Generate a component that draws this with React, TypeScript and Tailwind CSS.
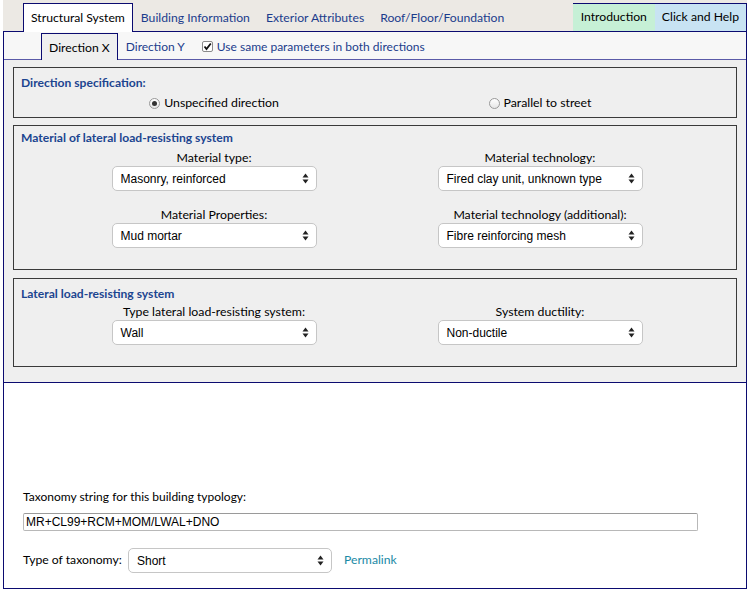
import React from "react";

const lato = { fontFamily: "Lato, 'Open Sans', sans-serif" };
const helv = { fontFamily: "'Liberation Sans', Arial, sans-serif" };

function Arrows() {
  return (
    <svg width="7" height="11" viewBox="0 0 7 11" className="shrink-0">
      <path d="M3.5 0.5 L6.5 4.5 L0.5 4.5 Z" fill="#222" />
      <path d="M3.5 10.5 L6.5 6.5 L0.5 6.5 Z" fill="#222" />
    </svg>
  );
}

function Select({ value, w = "w-[205px]" }: { value: string; w?: string }) {
  return (
    <div
      className={`${w} h-[25px] bg-white border border-[#c6c6c6] rounded-[5px] flex items-center justify-between pl-[8px] pr-[7px] text-[12px] text-black`}
      style={helv}
    >
      <span>{value}</span>
      <Arrows />
    </div>
  );
}

function Field({ label, value }: { label: string; value: string }) {
  return (
    <div className="flex flex-col items-center">
      <div className="text-[12.3px] leading-[16px] text-black h-[16px]">{label}</div>
      <Select value={value} />
    </div>
  );
}

function Radio({ checked, label }: { checked?: boolean; label: string }) {
  return (
    <div className="flex items-center justify-center gap-[4px]">
      <span className="w-[11px] h-[11px] rounded-full border border-[#9a9a9a] bg-gradient-to-b from-white to-[#e6e6e6] flex items-center justify-center">
        {checked && <span className="w-[5px] h-[5px] rounded-full bg-[#333]" />}
      </span>
      <span className="text-[12.3px] text-black">{label}</span>
    </div>
  );
}

export default function App() {
  return (
    <div className="w-[750px] h-[597px] bg-white" style={lato}>
      <div className="ml-[3px] w-[744px] pt-[3px] bg-[#ece9e4]">
        {/* Top tab bar */}
        <div className="flex h-[29px] items-stretch border-b border-[#0b0b70] relative">
          <div className="w-[20px]" />
          <div className="bg-white border border-b-0 border-[#0b0b70] px-[7px] flex items-center text-[12.2px] text-black -mb-[1px] h-[29px] pt-[1px]">
            Structural System
          </div>
          <div className="flex items-center text-[12.2px] text-[#1b3c8c] pl-[8px] gap-[16px] pt-[2px]">
            <span>Building Information</span>
            <span>Exterior Attributes</span>
            <span>Roof/Floor/Foundation</span>
          </div>
          <div className="flex-1" />
          <div className="flex items-stretch border-t border-r border-[#0b0b70] text-[12.2px] text-black">
            <div className="bg-[#c6f0d6] px-[8px] flex items-center">Introduction</div>
            <div className="bg-[#c8e3f3] px-[7px] flex items-center">Click and Help</div>
          </div>
        </div>
      </div>
      <div className="ml-[3px] w-[744px] border-l border-r border-b border-[#0b0b70] h-[557px]">
        {/* Sub tabs */}
        <div className="h-[28px] bg-[#f7f7f7] flex items-stretch border-b border-[#5a5aa8]">
          <div className="w-[37px]" />
          <div className="bg-[#efefef] border border-b-0 border-[#0b0b70] px-[7px] flex items-center text-[12.2px] text-black -mb-[1px] mt-[1px] pt-[2px]">
            Direction X
          </div>
          <div className="flex items-center text-[12px] pl-[8px] pt-[2px]">
            <span className="text-[#1b3c8c]">Direction Y</span>
            <span className="ml-[17px] w-[11px] h-[11px] border border-[#8a8a8a] rounded-[2px] bg-white flex items-center justify-center">
              <svg width="9" height="9" viewBox="0 0 9 9">
                <path d="M1.5 4.5 L3.5 7 L7.8 1.5" stroke="#111" strokeWidth="1.8" fill="none" />
              </svg>
            </span>
            <span className="ml-[4px] text-[#1b3c8c]">Use same parameters in both directions</span>
          </div>
        </div>

        {/* Content */}
        <div className="bg-[#efefef] border-b border-[#0b0b70] px-[9px] pt-[7px] pb-[15px]">
          <div className="border border-[#3a3a3a] h-[51px] pt-[7px]">
            <div className="pl-[7px] text-[12.1px] font-bold text-[#1c4590] leading-[16px]">Direction specification:</div>
            <div className="grid grid-cols-[326px_326px] pl-[37px] mt-[3px]">
              <Radio checked label="Unspecified direction" />
              <Radio label="Parallel to street" />
            </div>
          </div>

          <div className="border border-[#3a3a3a] h-[145px] mt-[7px] pt-[4px]">
            <div className="pl-[7px] text-[12.1px] font-bold text-[#1c4590] leading-[16px]">Material of lateral load-resisting system</div>
            <div className="grid grid-cols-[326px_326px] pl-[37px] mt-[4px] gap-y-[16px]">
              <Field label="Material type:" value="Masonry, reinforced" />
              <Field label="Material technology:" value="Fired clay unit, unknown type" />
              <Field label="Material Properties:" value="Mud mortar" />
              <Field label="Material technology (additional):" value="Fibre reinforcing mesh" />
            </div>
          </div>

          <div className="border border-[#3a3a3a] h-[89px] mt-[8px] pt-[7px]">
            <div className="pl-[7px] text-[12.1px] font-bold text-[#1c4590] leading-[16px]">Lateral load-resisting system</div>
            <div className="grid grid-cols-[326px_326px] pl-[37px] mt-[2px]">
              <Field label="Type lateral load-resisting system:" value="Wall" />
              <Field label="System ductility:" value="Non-ductile" />
            </div>
          </div>
        </div>

        {/* Bottom */}
        <div className="pl-[19px] pt-[106px]">
          <div className="text-[12px] text-black leading-[16px]">Taxonomy string for this building typology:</div>
          <div
            className="mt-[8px] w-[675px] h-[18px] border border-[#b8b8b8] border-t-[#9a9a9a] rounded-[2px] bg-white flex items-center pl-[2px] text-[12px] text-black"
            style={helv}
          >
            MR+CL99+RCM+MOM/LWAL+DNO
          </div>
          <div className="flex items-center mt-[17px]">
            <span className="text-[12.2px] text-black w-[105px]">Type of taxonomy:</span>
            <Select value="Short" w="w-[204px]" />
            <span className="ml-[12px] text-[12.2px] text-[#1b8aa6]">Permalink</span>
          </div>
        </div>
      </div>
    </div>
  );
}
